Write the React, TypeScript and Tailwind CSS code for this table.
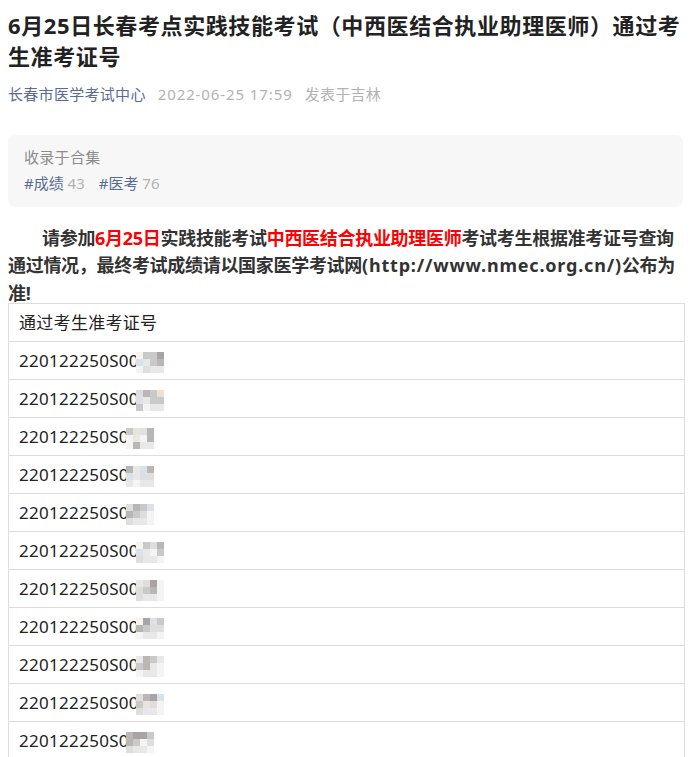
import React from 'react'

const cjk = '"Noto Sans", "Noto Sans CJK SC", sans-serif'

// mosaic patterns for the blurred tail of each ticket number
const palette = ['#f4f4f4', '#dedede', '#c9c9c9', '#b9b6b6', '#d9e2ea', '#ece2d8', '#a9a3a3', '#e8e8e8']
const mosaics: number[][] = [
  [0, 2, 2, 6, 4, 7, 2, 3, 0, 1, 7, 7],
  [1, 3, 2, 5, 4, 7, 2, 2, 2, 0, 7, 7],
  [2, 5, 4, 3, 0, 7, 0, 3, 0, 3, 7, 7],
  [3, 7, 4, 3, 4, 7, 1, 1, 7, 0, 7, 7],
  [1, 3, 2, 4, 3, 2, 1, 0, 1, 7, 7, 0],
  [0, 2, 1, 3, 4, 7, 0, 2, 1, 7, 7, 0],
  [7, 1, 6, 0, 1, 2, 3, 0, 1, 7, 7, 0],
  [0, 6, 4, 2, 3, 2, 1, 1, 0, 7, 7, 0],
  [7, 3, 2, 7, 2, 3, 7, 0, 0, 7, 7, 0],
  [1, 3, 6, 4, 2, 5, 1, 0, 1, 7, 7, 0],
  [3, 6, 6, 2, 3, 2, 0, 1, 1, 7, 7, 0],
]

const digitsLeft = [2, 2, 1, 1, 1, 2, 2, 2, 2, 2, 1, 2]

function Mosaic({ idx }: { idx: number }) {
  const cells = mosaics[idx % mosaics.length]
  return (
    <span className="inline-grid grid-cols-4 align-middle -ml-[3px]" style={{ width: 28 }}>
      {cells.map((c, i) => (
        <span key={i} className="h-[7px] w-[7px]" style={{ background: palette[c] }} />
      ))}
    </span>
  )
}

export default function App() {
  const rows = Array.from({ length: 12 }, (_, i) => i)

  return (
    <div className="bg-white w-[691px] min-h-[757px] px-2 pt-[10px] text-[#1a1a1a]" style={{ fontFamily: cjk }}>
      {/* title */}
      <h1 className="text-[22px] font-bold leading-[1.4] text-[#222] tracking-[0.6px]">
        6月25日长春考点实践技能考试（中西医结合执业助理医师）通过考生准考证号
      </h1>

      {/* meta */}
      <div className="mt-[12px] flex items-center gap-[12px] text-[15px] leading-[20px]">
        <span className="text-[#576b95] tracking-[0.3px]">长春市医学考试中心</span>
        <span className="text-[#b2b2b2] tracking-[0.9px]">2022-06-25 17:59</span>
        <span className="text-[#b2b2b2] tracking-[0.3px]">发表于吉林</span>
      </div>

      {/* collection box */}
      <div className="mt-[31px] rounded-[8px] bg-[#f7f7f7] px-4 pt-[10px] pb-[12px] text-[15px] leading-[24px]">
        <div className="text-[#8c8c8c] tracking-[0.3px]">收录于合集</div>
        <div className="mt-[2px] flex gap-[14px]">
          <span className="text-[#576b95]">
            #成绩 <span className="text-[#b2b2b2]">43</span>
          </span>
          <span className="text-[#576b95]">
            #医考 <span className="text-[#b2b2b2]">76</span>
          </span>
        </div>
      </div>

      {/* notice */}
      <p className="mt-[18px] indent-[34px] text-[18px] font-bold leading-[27.5px] text-[#333] tracking-[-0.3px]">
        请参加<span className="text-[#ff0000]">6月25日</span>实践技能考试<span className="text-[#ff0000]">中西医结合执业助理医师</span>考试考生根据准考证号查询通过情况，最终考试成绩请以国家医学考试网<span className="tracking-[0.8px]">(http://www.nmec.org.cn/)</span>公布为准!
      </p>

      {/* table */}
      <table className="-mt-[4px] w-[677px] border-collapse text-[17px] text-[#222]">
        <tbody>
          <tr>
            <td className="border border-[#dddddd] h-[38px] px-[10px] py-0 align-middle tracking-[0.3px]">通过考生准考证号</td>
          </tr>
          {rows.map((i) => (
            <tr key={i}>
              <td className="border border-[#dddddd] h-[38px] px-[10px] py-0 align-middle whitespace-nowrap tracking-[0.3px]">
                {digitsLeft[i] === 2 ? '220122250S00' : '220122250S0'}
                <Mosaic idx={i} />
              </td>
            </tr>
          ))}
        </tbody>
      </table>
    </div>
  )
}
